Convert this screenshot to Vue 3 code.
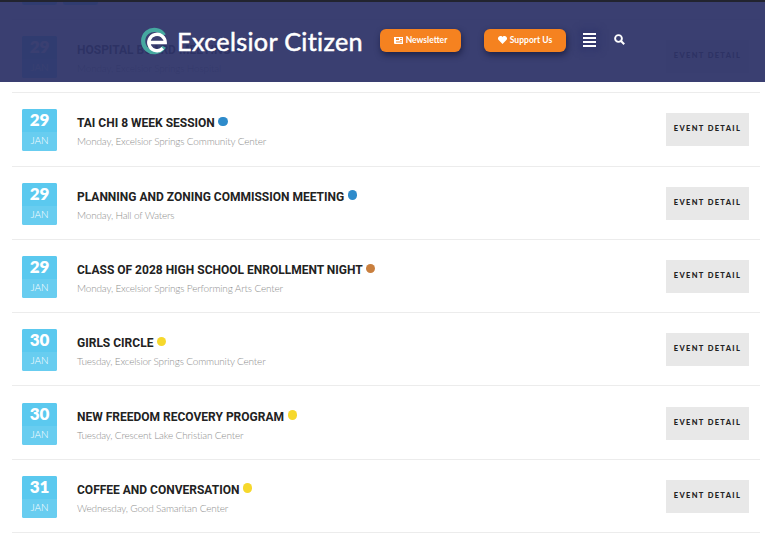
<template>
  <div class="page">
    <header class="site-header">
      <div class="brand">
        <svg class="logo" width="30" height="30" viewBox="0 0 30 30">
          <path d="M25 9.3 A11.2 11.2 0 1 0 25 20.7" fill="none" stroke="#45a8a0" stroke-width="4.2" />
          <path d="M9.8 16.5 H26.2 A8.2 8.2 0 1 0 23.8 22.3" fill="none" stroke="#fff" stroke-width="3.4" />
        </svg>
        <span class="brand-name">Excelsior Citizen</span>
      </div>
      <a class="cta cta-news">
        <svg width="9" height="7" viewBox="0 0 9 7"><path d="M0 0H9V7H1Q0 7 0 6ZM2 1.2V3H5V1.2ZM6 1.2V2H8V1.2ZM6 3V3.8H8V3ZM2 4.6V5.4H8V4.6Z" fill="#fff" fill-rule="evenodd" /></svg>
        <span>Newsletter</span>
      </a>
      <a class="cta cta-support">
        <svg width="9" height="8" viewBox="0 0 9 8"><path d="M4.5 8 L.6 4.1 A2.3 2.3 0 0 1 4.5 1 A2.3 2.3 0 0 1 8.4 4.1 Z" fill="#fff" /></svg>
        <span>Support Us</span>
      </a>
      <span class="burger"><i></i><i></i><i></i><i></i></span>
      <svg class="search" width="11" height="11" viewBox="0 0 11 11">
        <circle cx="4.5" cy="4.5" r="3.4" fill="none" stroke="#fff" stroke-width="1.9" />
        <path d="M7 7 L10.2 10.2" stroke="#fff" stroke-width="2.1" />
      </svg>
    </header>

    <ul class="events">
      <li class="event event-prior">
        <div class="date"></div>
        <div class="date date-end"></div>
      </li>
      <li v-for="ev in events" :key="ev.title" class="event">
        <div class="date">
          <strong>{{ ev.day }}</strong>
          <span>JAN</span>
        </div>
        <div class="info">
          <h3>{{ ev.title }} <i class="dot" :style="{ background: ev.color }"></i></h3>
          <p>{{ ev.place }}</p>
        </div>
        <a class="detail">EVENT DETAIL</a>
      </li>
    </ul>
  </div>
</template>

<script setup>
const blue = '#2e8bcb'
const orange = '#c97f3e'
const yellow = '#f6d82c'

const events = [
  { day: 29, title: 'HOSPITAL BOARD MEETING', place: 'Monday, Excelsior Springs Hospital', color: blue },
  { day: 29, title: 'TAI CHI 8 WEEK SESSION', place: 'Monday, Excelsior Springs Community Center', color: blue },
  { day: 29, title: 'PLANNING AND ZONING COMMISSION MEETING', place: 'Monday, Hall of Waters', color: blue },
  { day: 29, title: 'CLASS OF 2028 HIGH SCHOOL ENROLLMENT NIGHT', place: 'Monday, Excelsior Springs Performing Arts Center', color: orange },
  { day: 30, title: 'GIRLS CIRCLE', place: 'Tuesday, Excelsior Springs Community Center', color: yellow },
  { day: 30, title: 'NEW FREEDOM RECOVERY PROGRAM', place: 'Tuesday, Crescent Lake Christian Center', color: yellow },
  { day: 31, title: 'COFFEE AND CONVERSATION', place: 'Wednesday, Good Samaritan Center', color: yellow }
]
</script>

<style>
html, body { margin: 0; background: #fff; overflow: hidden; }
</style>

<style scoped>
* { box-sizing: border-box; margin: 0; padding: 0; }
.page { position: relative; width: 765px; height: 536px; overflow: hidden; background: #fff; font-family: 'Lato', sans-serif; }

.site-header { position: absolute; top: 0; left: 0; right: 0; height: 82px; z-index: 2; display: flex; align-items: center; padding: 0 0 4px 139px; background: rgba(46, 51, 104, .94); border-top: 2px solid #22242f; }
.brand { display: flex; align-items: center; gap: 8px; width: 241px; margin-top: 1px; }
.logo { flex-shrink: 0; }
.brand-name { color: #fff; font-size: 25.2px; font-weight: 400; letter-spacing: .33px; white-space: nowrap; -webkit-text-stroke: .5px #fff; }
.cta { display: flex; align-items: center; justify-content: center; gap: 3px; height: 23px; border-radius: 6px; background: #f58220; color: #fff; font-size: 8.5px; font-weight: 700; box-shadow: 1px 3px 6px rgba(15, 18, 50, .65); }
.cta span { margin-top: -1px; }
.cta-news { width: 81px; margin-right: 23px; }
.cta-support { width: 82px; margin-right: 17px; letter-spacing: .05px; }
.burger { display: flex; flex-direction: column; gap: 2px; width: 13px; margin-right: 18px; box-shadow: 0 0 6px 4px rgba(44, 50, 105, .5); background: rgba(44, 50, 105, .5); }
.burger i { height: 2px; background: #fff; }
.search { margin-top: -1px; }

.events { list-style: none; margin: -53.3px 5px 0 12px; }
.event { display: flex; align-items: center; height: 73.3px; padding: 2px 11px 0 10px; border-bottom: 1px solid #ececec; }
.event-prior { gap: 6px; }
.date { width: 35px; height: 42px; flex-shrink: 0; display: flex; flex-direction: column; border-radius: 2px; overflow: hidden; background: #5bc9ef; color: #fff; text-align: center; }
.date strong { height: 23px; font-size: 17px; line-height: 22px; font-weight: 800; background: #5bc9ef; }
.date span { height: 19px; font-size: 10px; line-height: 17px; font-weight: 300; background: #68cdf0; }
.info { flex: 1; padding: 3px 0 0 20px; }
.info h3 { font-family: 'Roboto', sans-serif; font-size: 12px; line-height: 16px; font-weight: 700; color: #222; }
.dot { display: inline-block; width: 9.5px; height: 9.5px; border-radius: 50%; margin-left: .5px; vertical-align: 1px; }
.info p { margin-top: 3px; font-size: 10px; line-height: 14px; font-weight: 300; letter-spacing: -.17px; color: #8e8e8e; }
.detail { display: flex; align-items: center; justify-content: center; width: 83px; height: 33px; margin-top: -1px; padding-bottom: 2px; background: #e8e8e8; color: #222; font-size: 7.5px; font-weight: 900; letter-spacing: 1.35px; white-space: nowrap; }
</style>
